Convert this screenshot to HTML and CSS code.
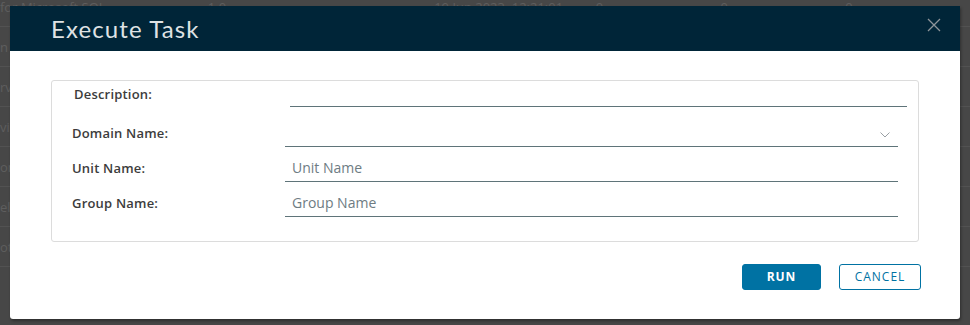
FILE: index.html
```html
<!DOCTYPE html>
<html lang="en">
<head>
  <meta charset="UTF-8" />
  <title>Execute Task</title>
  <link rel="stylesheet" href="styles.css">
</head>
<body>
  <!-- Table behind the dialog backdrop -->
  <div class="backdrop">
    <div class="bg-row first">
      <span class="bg-name">for Microsoft SQL</span>
      <span class="bg-ver">1.0</span>
      <span class="bg-date">19 Jun 2023, 12:21:01</span>
      <span class="bg-num">0</span>
      <span class="bg-num">0</span>
      <span class="bg-num">0</span>
    </div>
    <div class="bg-row"><span class="bg-name">n</span></div>
    <div class="bg-row"><span class="bg-name">rv</span></div>
    <div class="bg-row"><span class="bg-name">vic</span></div>
    <div class="bg-row"><span class="bg-name">on</span></div>
    <div class="bg-row"><span class="bg-name">el</span></div>
    <div class="bg-row"><span class="bg-name">ot</span></div>
  </div>

  <!-- Execute Task dialog -->
  <div class="modal">
    <div class="modal-header">
      <h3 class="modal-title">Execute Task</h3>
      <button class="close" aria-label="Close">
        <svg width="14" height="14" viewBox="0 0 14 14">
          <path d="M1 1 L13 13 M13 1 L1 13" stroke="#8e9499" stroke-width="1.3" fill="none"/>
        </svg>
      </button>
    </div>

    <div class="modal-body">
      <div class="form-box">
        <div class="form-row desc-row">
          <label>Description:</label>
          <input type="text" class="line-input">
        </div>
        <div class="form-row">
          <label>Domain Name:</label>
          <div class="select-wrap line-input">
            <svg width="10" height="6" viewBox="0 0 10 6">
              <path d="M0.5 0.5 L5 5 L9.5 0.5" stroke="#9aa0a4" stroke-width="1" fill="none"/>
            </svg>
          </div>
        </div>
        <div class="form-row">
          <label>Unit Name:</label>
          <input type="text" class="line-input" placeholder="Unit Name">
        </div>
        <div class="form-row">
          <label>Group Name:</label>
          <input type="text" class="line-input" placeholder="Group Name">
        </div>
      </div>
    </div>

    <div class="modal-footer">
      <button class="btn btn-primary">RUN</button>
      <button class="btn btn-outline">CANCEL</button>
    </div>
  </div>
</body>
</html>
```

FILE: styles.css
```css
* {
  margin: 0;
  padding: 0;
  box-sizing: border-box;
}

body {
  font-family: "Open Sans", Lato, sans-serif;
  background-color: #474747;
  width: 970px;
  height: 325px;
  overflow: hidden;
  position: relative;
}

/* Faded table under the overlay */
.backdrop {
  margin-top: -13px;
}

.bg-row {
  height: 40px;
  border-bottom: 1px solid #525252;
  display: flex;
  align-items: center;
  font-size: 13px;
  color: #5e5e5e;
}

.bg-name {
  width: 225px;
}

.bg-ver {
  width: 245px;
}

.bg-date {
  width: 175px;
}

.bg-num {
  width: 135px;
}

/* Dialog */
.modal {
  position: absolute;
  left: 10px;
  top: 6px;
  width: 950px;
  height: 313px;
  background-color: #fff;
  border-radius: 0 0 3px 3px;
  box-shadow: 1px 2px 3px rgba(0, 0, 0, 0.35);
}

.modal-header {
  height: 45px;
  background-color: #002538;
  display: flex;
  align-items: center;
  justify-content: space-between;
  padding: 0 19px 0 41px;
}

.modal-title {
  font-family: Lato, sans-serif;
  font-weight: 400;
  font-size: 24px;
  color: #dfe2e4;
  letter-spacing: 1.1px;
  padding-bottom: 1px;
}

.close {
  background: none;
  border: none;
  width: 14px;
  height: 14px;
  margin-bottom: 7px;
  cursor: pointer;
}

.modal-body {
  padding: 29px 41px 0 41px;
}

.form-box {
  border: 1px solid #dcdcdc;
  border-radius: 3px;
  height: 162px;
  padding: 1px 20px 0 20px;
  display: flex;
  flex-direction: column;
  gap: 10px;
}

.form-row {
  display: grid;
  grid-template-columns: 213px 1fr;
  align-items: center;
}

.form-row label {
  font-size: 13px;
  font-weight: 600;
  color: #3c3c3c;
  letter-spacing: 0.2px;
  padding-bottom: 4px;
}

.desc-row {
  grid-template-columns: 216px 1fr;
  margin-right: -9px;
  margin-left: 2px;
  margin-bottom: 5px;
}

.desc-row label {
  padding-bottom: 2px;
}

.line-input {
  height: 25px;
  border: none;
  border-bottom: 1px solid #5f7479;
  outline: none;
  font-family: inherit;
  font-size: 14px;
  color: #333;
  padding: 0 7px 3px 7px;
  background: transparent;
}

.line-input::placeholder {
  color: #6e7c83;
}

.select-wrap {
  display: flex;
  justify-content: flex-end;
  align-items: center;
  padding: 2px 8px 0 0;
}

/* Footer buttons */
.modal-footer {
  display: flex;
  justify-content: flex-end;
  gap: 18px;
  padding: 22px 39px 0 0;
}

.btn {
  height: 26px;
  border-radius: 3px;
  font-family: inherit;
  font-size: 12px;
  font-weight: 700;
  letter-spacing: 1px;
  padding-bottom: 1px;
  cursor: pointer;
}

.btn-primary {
  width: 79px;
  background-color: #0072a3;
  border: 1px solid #0072a3;
  color: #fff;
}

.btn-outline {
  width: 82px;
  background-color: #fff;
  border: 1px solid #0072a3;
  color: #0072a3;
  font-weight: 400;
}
```
